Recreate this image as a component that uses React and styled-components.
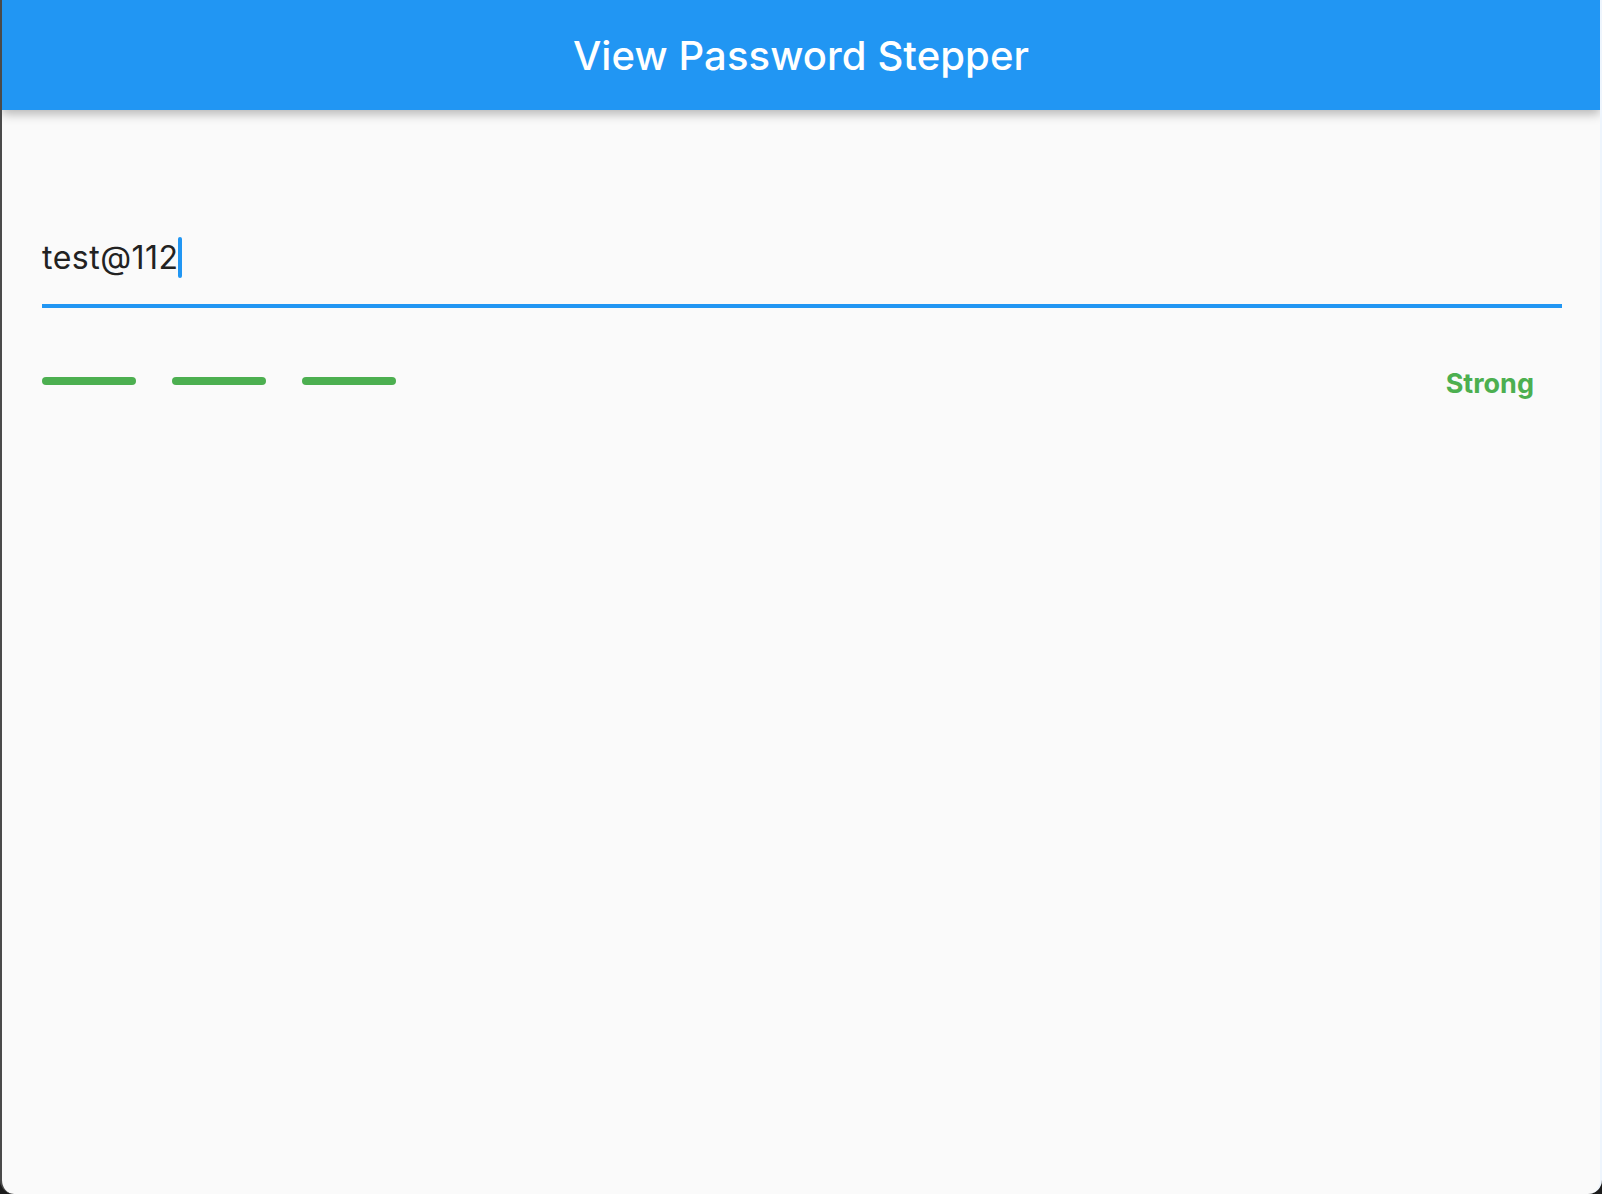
import React from "react";
import styled, { createGlobalStyle } from "styled-components";

const GlobalStyle = createGlobalStyle`
  html, body {
    margin: 0;
    padding: 0;
    background: #1c1c1c;
  }
  #root {
    width: 1602px;
    height: 1194px;
  }
  * { box-sizing: border-box; }
`;

const Window = styled.div`
  width: 1602px;
  height: 1194px;
  display: flex;
  flex-direction: column;
  background: #fafafa;
  border-left: 2px solid #4a4a4a;
  border-right: 2px solid #eef5fd;
  border-radius: 0 0 14px 14px;
  overflow: hidden;
  font-family: Inter, "Noto Sans", "Liberation Sans", sans-serif;
`;

const AppBar = styled.header`
  height: 110px;
  flex: 0 0 auto;
  display: flex;
  align-items: center;
  justify-content: center;
  background: #2196f3;
  box-shadow: 0 4px 10px rgba(0, 0, 0, 0.28);
  position: relative;
  z-index: 1;
`;

const Title = styled.h1`
  margin: 0;
  color: #ffffff;
  font-size: 40px;
  font-weight: 500;
  letter-spacing: 0.1px;
`;

const Body = styled.main`
  flex: 1;
  display: flex;
  flex-direction: column;
  padding: 127px 38px 0 40px;
`;

const Field = styled.div`
  display: flex;
  align-items: flex-start;
  padding-bottom: 26px;
  border-bottom: 4px solid #2196f3;
`;

const FieldText = styled.span`
  font-size: 32px;
  line-height: 41px;
  letter-spacing: 0.5px;
  color: #222222;
`;

const Caret = styled.span`
  width: 4px;
  height: 41px;
  border-radius: 2px;
  background: #2196f3;
  margin-left: -1px;
`;

const StrengthRow = styled.div`
  display: flex;
  align-items: flex-start;
  margin-top: 58px;
`;

const Bars = styled.div`
  display: flex;
  gap: 36px;
  margin-top: 11px;
`;

const Bar = styled.div`
  width: 94px;
  height: 8px;
  border-radius: 4px;
  background: ${(p) => (p.$active ? "#4caf50" : "#e0e0e0")};
`;

const StrengthLabel = styled.span`
  margin-left: auto;
  margin-right: 28px;
  font-size: 27px;
  line-height: 34px;
  margin-top: 1px;
  font-weight: 700;
  color: #4caf50;
`;

export default function App() {
  const steps = [true, true, true];
  return (
    <>
      <GlobalStyle />
      <Window>
        <AppBar>
          <Title>View Password Stepper</Title>
        </AppBar>
        <Body>
          <Field>
            <FieldText>test@112</FieldText>
            <Caret />
          </Field>
          <StrengthRow>
            <Bars>
              {steps.map((a, i) => (
                <Bar key={i} $active={a} />
              ))}
            </Bars>
            <StrengthLabel>Strong</StrengthLabel>
          </StrengthRow>
        </Body>
      </Window>
    </>
  );
}
